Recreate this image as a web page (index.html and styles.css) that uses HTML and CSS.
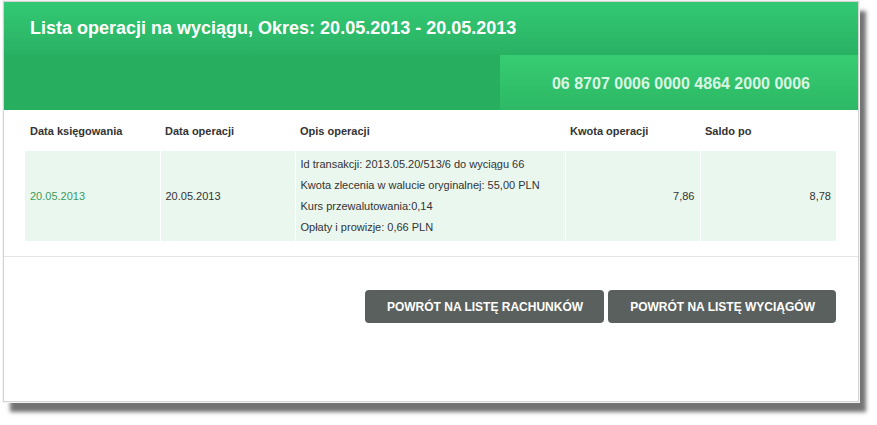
FILE: index.html
```html
<!DOCTYPE html>
<html lang="pl">
<head>
<meta charset="utf-8">
<title>Lista operacji na wyciągu</title>
<link rel="stylesheet" href="styles.css">
</head>
<body>
<div class="panel">
  <div class="hdr-top">Lista operacji na wyciągu, Okres: 20.05.2013 - 20.05.2013</div>
  <div class="hdr-bot">
    <div class="acct">06 8707 0006 0000 4864 2000 0006</div>
  </div>
  <div class="tbl-wrap">
    <table class="ops">
      <colgroup>
        <col class="c1"><col class="c2"><col class="c3"><col class="c4"><col class="c5">
      </colgroup>
      <thead>
        <tr>
          <th>Data księgowania</th>
          <th>Data operacji</th>
          <th>Opis operacji</th>
          <th>Kwota operacji</th>
          <th>Saldo po</th>
        </tr>
      </thead>
      <tbody>
        <tr>
          <td class="date">20.05.2013</td>
          <td>20.05.2013</td>
          <td>Id transakcji: 2013.05.20/513/6 do wyciągu 66<br>Kwota zlecenia w walucie oryginalnej: 55,00 PLN<br>Kurs przewalutowania:0,14<br>Opłaty i prowizje: 0,66 PLN</td>
          <td class="num">7,86</td>
          <td class="num">8,78</td>
        </tr>
      </tbody>
    </table>
  </div>
  <div class="sep"></div>
  <div class="actions">
    <button class="btn">POWRÓT NA LISTĘ RACHUNKÓW</button>
    <button class="btn">POWRÓT NA LISTĘ WYCIĄGÓW</button>
  </div>
</div>
</body>
</html>
```

FILE: styles.css
```css
body {
  margin: 0;
  padding-bottom: 20px;
  background: #fff;
  font-family: "Liberation Sans", Arial, sans-serif;
}

.panel {
  margin: 1px 0 0 3px;
  width: 854px;
  height: 399px;
  border: 1px solid #d4d4d4;
  background: #fff;
  box-shadow: 0 0 0 1px #f3f3f3, 7px 10px 4px rgba(0, 0, 0, 0.55);
}

.hdr-top {
  height: 53px;
  display: flex;
  align-items: center;
  padding-left: 26px;
  background: linear-gradient(#33c974, #29b163);
  color: #fff;
  font-size: 18px;
  font-weight: bold;
}

.hdr-bot {
  height: 55px;
  display: flex;
  justify-content: flex-end;
  background: #28ae5f;
}

.acct {
  width: 358px;
  box-sizing: border-box;
  display: flex;
  align-items: center;
  justify-content: flex-end;
  padding: 2px 48px 0 0;
  background: linear-gradient(#37cc72, #2db865);
  color: #d9f6e4;
  font-size: 16px;
  font-weight: bold;
}

.tbl-wrap {
  padding: 1px 22px 0 21px;
}

.ops {
  width: 811px;
  border-collapse: collapse;
  table-layout: fixed;
  font-size: 11px;
  color: #333;
}

.c1, .c2, .c4 { width: 135px; }
.c3 { width: 270px; }
.c5 { width: 136px; }

.ops th {
  height: 40px;
  padding: 0 5px;
  text-align: left;
  font-weight: bold;
  color: #333;
}

.ops td {
  background: #eaf7ef;
  padding: 3px 5px;
  line-height: 21px;
  border-left: 1px solid #fff;
}

.ops td:first-child { border-left: none; }

.ops td.date { color: #3a9a5d; }
.ops td.num { text-align: right; }

.sep {
  margin-top: 15px;
  border-top: 1px solid #e4e4e4;
}

.actions {
  display: flex;
  justify-content: flex-end;
  gap: 4px;
  padding: 33px 22px 0 0;
}

.btn {
  height: 33px;
  padding: 0 21px 0 22px;
  border: none;
  border-radius: 4px;
  background: #5a605d;
  color: #fff;
  font-family: "Liberation Sans", Arial, sans-serif;
  font-size: 12px;
  font-weight: bold;
}
```
